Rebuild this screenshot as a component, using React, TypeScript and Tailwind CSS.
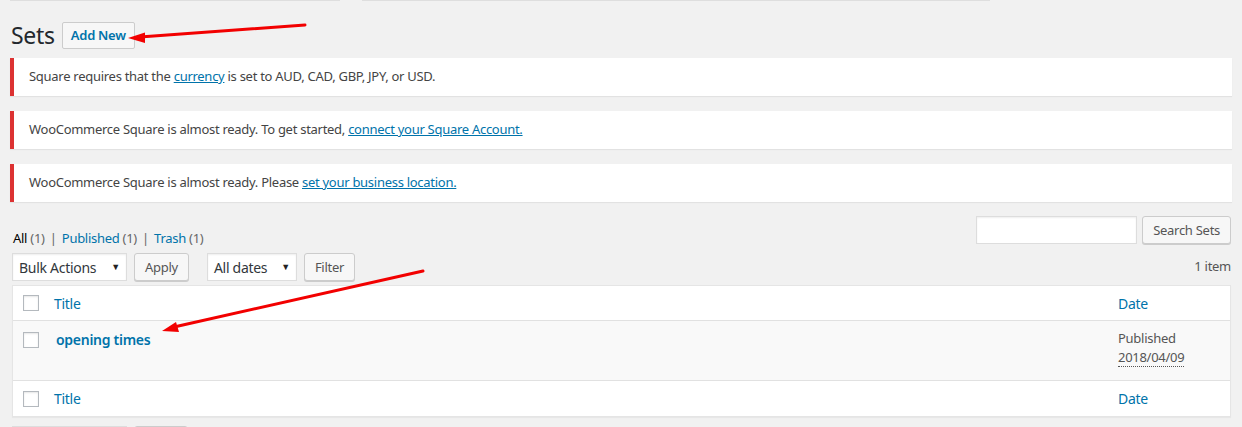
const font = { fontFamily: '"Noto Sans", "Open Sans", sans-serif', letterSpacing: '-0.28px' };

function Checkbox() {
  return <span className="block w-4 h-4 border border-[#b4b9be] bg-white shadow-[inset_0_1px_2px_rgba(0,0,0,0.1)]" />;
}

function Button({ children, className = '' }: { children: React.ReactNode; className?: string }) {
  return (
    <button className={`h-[28px] px-[10px] border border-[#cccccc] bg-[#f7f7f7] rounded-[3px] shadow-[0_1px_0_#cccccc] text-[13px] text-[#555555] leading-[26px] ${className}`}>
      {children}
    </button>
  );
}

function Select({ label, width, className = '' }: { label: string; width: string; className?: string }) {
  return (
    <div className={`h-[28px] ${width} border border-[#dddddd] bg-white shadow-[inset_0_1px_2px_rgba(0,0,0,0.07)] flex items-center justify-between pl-[6px] pr-[6px] text-[14px] text-[#32373c] ${className}`}>
      <span>{label}</span>
      <span className="text-[9px] text-[#222]">▼</span>
    </div>
  );
}

function Notice({ children }: { children: React.ReactNode }) {
  return (
    <div className="h-[38px] bg-white border-l-4 border-[#dc3232] shadow-[0_1px_1px_rgba(0,0,0,0.06)] flex items-center pl-[15px] text-[13px] text-[#444444]">
      <p>{children}</p>
    </div>
  );
}

function Arrows() {
  return (
    <svg className="absolute inset-0 pointer-events-none" width="1242" height="427">
      <g stroke="#f20000" strokeWidth="3" strokeLinecap="round" fill="#f20000">
        <line x1="305" y1="25" x2="140" y2="37" />
        <line x1="423" y1="271" x2="174" y2="327" />
      </g>
      <polygon points="128,38 145,32.5 145,43" fill="#f20000" />
      <polygon points="162,331 176,322 179,332" fill="#f20000" />
    </svg>
  );
}

export default function App() {
  return (
    <div className="relative h-[427px] overflow-hidden bg-[#f1f1f1]" style={font}>
      {/* Cut boxes from above */}
      <div className="flex gap-[22px] px-[10px]">
        <div className="h-[1px] w-[330px] bg-[#dedede]" />
        <div className="h-[1px] w-[628px] bg-[#dedede]" />
      </div>

      <div className="px-[10px]">
        {/* Heading */}
        <div className="flex items-center gap-[7px] pt-[20px] pl-[1px]">
          <h1 className="text-[23px] text-[#23282d] leading-[29px]">Sets</h1>
          <button className="h-[27px] px-[8px] border border-[#cccccc] bg-[#f7f7f7] rounded-[2px] text-[13px] font-semibold text-[#0073aa]">
            Add New
          </button>
        </div>

        {/* Notices */}
        <div className="flex flex-col gap-[15px] mt-[8px]">
          <Notice>
            Square requires that the <a className="text-[#0073aa] underline">currency</a> is set to AUD, CAD, GBP, JPY, or USD.
          </Notice>
          <Notice>
            WooCommerce Square is almost ready. To get started, <a className="text-[#0073aa] underline">connect your Square Account.</a>
          </Notice>
          <Notice>
            WooCommerce Square is almost ready. Please <a className="text-[#0073aa] underline">set your business location.</a>
          </Notice>
        </div>

        <div className="ml-[2px] mr-[1px]">
          {/* Views + search */}
          <div className="flex items-start justify-between mt-[14px] h-[28px]">
            <div className="text-[13px] text-[#666666] pl-[1px] pt-[13px]">
              <span className="text-black">All</span> (1) <span className="text-[#666666] mx-[2px]">|</span>{' '}
              <span className="text-[#0073aa]">Published</span> (1) <span className="text-[#666666] mx-[2px]">|</span>{' '}
              <span className="text-[#0073aa]">Trash</span> (1)
            </div>
            <div className="flex items-center gap-[5px]">
              <div className="w-[161px] h-[28px] border border-[#dddddd] bg-white shadow-[inset_0_1px_2px_rgba(0,0,0,0.07)]" />
              <Button className="px-[10px]">Search Sets</Button>
            </div>
          </div>

          {/* Tablenav */}
          <div className="flex items-center justify-between mt-[9px]">
            <div className="flex items-center">
              <Select label="Bulk Actions" width="w-[115px]" />
              <Button className="ml-[7px] px-[9px]">Apply</Button>
              <Select label="All dates" width="w-[90px]" className="ml-[18px]" />
              <Button className="ml-[7px] px-[9px]">Filter</Button>
            </div>
            <span className="text-[13px] text-[#555555]">1 item</span>
          </div>

          {/* Table */}
          <div className="mt-[4px] bg-white border border-[#e5e5e5] shadow-[0_1px_1px_rgba(0,0,0,0.04)] text-[14px]">
            <div className="h-[35px] flex items-center border-b border-[#e1e1e1]">
              <div className="w-[41px] pl-[10px]"><Checkbox /></div>
              <span className="flex-1 text-[#0073aa]">Title</span>
              <span className="w-[112px] text-[#0073aa]">Date</span>
            </div>
            <div className="h-[60px] flex items-start bg-[#f9f9f9] border-b border-[#e1e1e1] pt-[11px]">
              <div className="w-[41px] pl-[10px]"><Checkbox /></div>
              <span className="flex-1 pl-[2px] font-semibold text-[#0073aa] leading-[16px]">opening times</span>
              <div className="w-[112px] text-[13px] text-[#555555] leading-[19px] -mt-[3px]">
                <div>Published</div>
                <div><span className="border-b border-dotted border-[#555555]">2018/04/09</span></div>
              </div>
            </div>
            <div className="h-[35px] flex items-center">
              <div className="w-[41px] pl-[10px]"><Checkbox /></div>
              <span className="flex-1 text-[#0073aa]">Title</span>
              <span className="w-[112px] text-[#0073aa]">Date</span>
            </div>
          </div>

          {/* Bottom tablenav, mostly below the fold */}
          <div className="flex items-start mt-[9px]">
            <div className="h-[28px] w-[115px] border border-[#dddddd] bg-white" />
            <div className="ml-[7px] h-[28px] w-[54px] border border-[#cccccc] bg-[#f7f7f7] rounded-[3px]" />
          </div>
        </div>
      </div>

      <Arrows />
    </div>
  );
}
